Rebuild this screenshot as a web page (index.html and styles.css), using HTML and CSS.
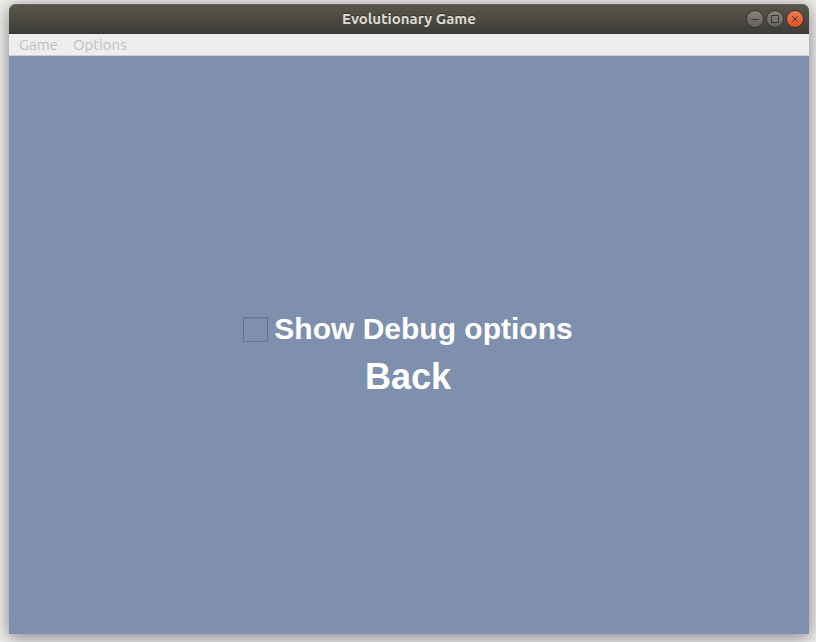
FILE: index.html
```html
<!DOCTYPE html>
<html lang="en">
<head>
<meta charset="utf-8">
<meta name="viewport" content="width=device-width, initial-scale=1">
<title>Evolutionary Game</title>
<link rel="stylesheet" href="styles.css">
</head>
<body>
<div class="window">
  <header class="titlebar">
    <h1 class="title">Evolutionary Game</h1>
    <div class="controls">
      <button class="control" type="button" aria-label="Minimize">
        <svg viewBox="0 0 18 18"><path d="M5 9.500h8"/></svg>
      </button>
      <button class="control" type="button" aria-label="Maximize">
        <svg viewBox="0 0 18 18"><path d="M5.500 5.500h7v7h-7z"/></svg>
      </button>
      <button class="control close" type="button" aria-label="Close">
        <svg viewBox="0 0 18 18"><path d="M6.200 6.200l5.600 5.600M11.800 6.200l-5.600 5.600"/></svg>
      </button>
    </div>
  </header>
  <nav class="menubar">
    <button class="menu" type="button" disabled>Game</button>
    <button class="menu" type="button" disabled>Options</button>
  </nav>
  <main class="screen">
    <label class="option" for="debug"><input class="check" id="debug" type="checkbox">Show Debug options</label>
    <button class="back" type="button">Back</button>
  </main>
</div>
</body>
</html>
```
FILE: styles.css
```css
* {
  box-sizing: border-box;
}

body {
  margin: 0;
  min-height: 100vh;
  display: flex;
  padding: 4px 7px 8px 9px;
  background: #f2f1f0;
  font-family: Ubuntu, "Noto Sans", sans-serif;
}

button {
  border: 0;
  padding: 0;
  background: none;
  font: inherit;
}

.window {
  flex: 1;
  display: flex;
  flex-direction: column;
  border-radius: 7px 7px 0 0;
  box-shadow: 0 3px 18px 1px rgba(0, 0, 0, 0.45);
}

.titlebar {
  display: grid;
  grid-template-columns: 1fr auto 1fr;
  align-items: center;
  height: 30px;
  padding: 0 5px;
  border-radius: 7px 7px 0 0;
  background: linear-gradient(#59574d, #3d3c37);
  box-shadow: inset 0 1px #66645a, inset 0 -1px #34332f;
}

.title {
  grid-column: 2;
  margin: 0;
  color: #dfdbd2;
  font-size: 15px;
  line-height: 20px;
  font-weight: 700;
  text-shadow: 0 -1px #33322e;
}

.controls {
  display: flex;
  justify-content: flex-end;
  gap: 2px;
}

.control {
  width: 18px;
  height: 18px;
  border: 1px solid #34332e;
  border-radius: 50%;
  background: linear-gradient(#85837b, #64625b);
}

.control svg {
  display: block;
  width: 18px;
  height: 18px;
  margin: -1px;
  fill: none;
  stroke: #393832;
}

.close {
  background: linear-gradient(#f37b56, #e4521f);
}

.menubar {
  display: flex;
  gap: 15px;
  height: 22px;
  padding: 0 10px;
  border-bottom: 1px solid #cccccc;
  background: #eeeeee;
}

.menu {
  color: #bfbfbf;
  font-size: 15px;
  line-height: 21px;
}

.screen {
  flex: 1;
  display: flex;
  flex-direction: column;
  align-items: center;
  justify-content: center;
  gap: 10px;
  padding: 20px 2px 0 0;
  background: #7f90ae;
  color: #ffffff;
  font-family: "Liberation Sans", Arial, sans-serif;
  font-weight: 700;
}

.option {
  display: flex;
  align-items: center;
  gap: 6px;
  font-size: 30px;
  line-height: 34px;
}

.check {
  appearance: none;
  width: 25px;
  height: 25px;
  margin: 0;
  border: 1px solid #65738b;
  background: transparent;
  box-shadow: inset 0 1px #7484a0;
}

.check:checked {
  background: #65738b;
}

.back {
  color: inherit;
  font-size: 36px;
  line-height: 42px;
}
```
